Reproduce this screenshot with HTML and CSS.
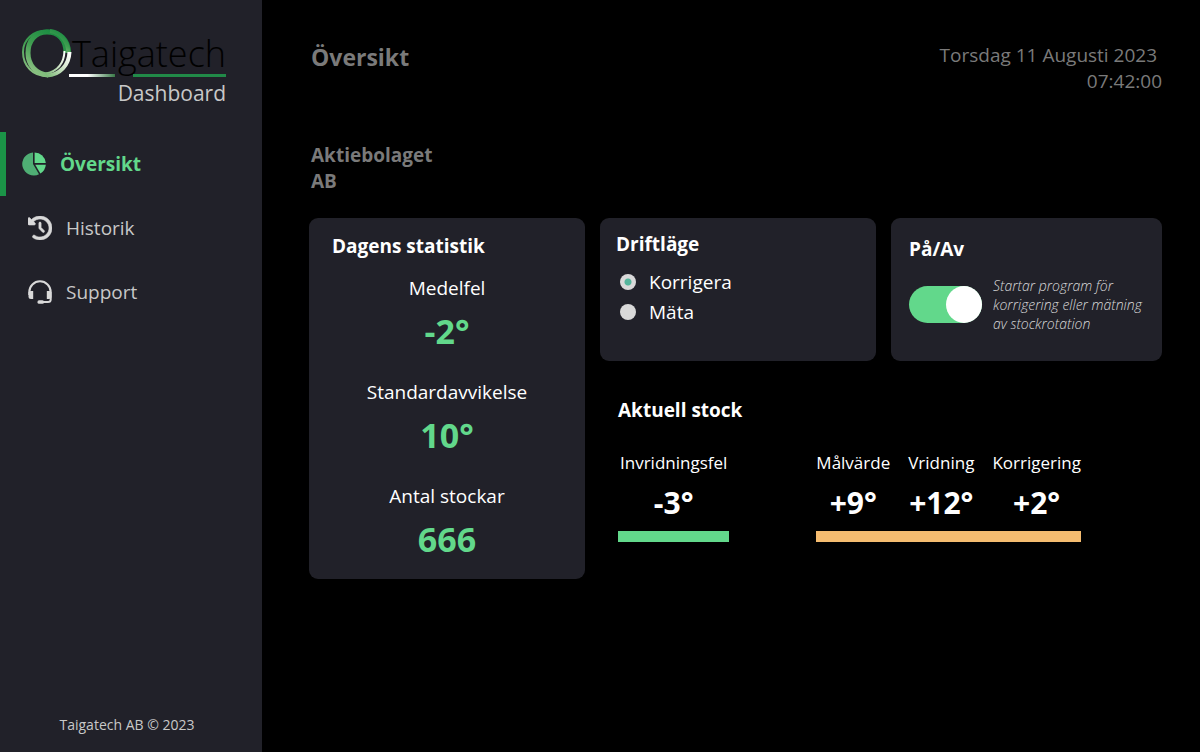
FILE: index.html
```html
<!DOCTYPE html>
<html lang="sv">
<head>
  <meta charset="UTF-8">
  <title>Taigatech Dashboard</title>
  <meta name="viewport" content="width=device-width, initial-scale=1.0">
  <link rel="stylesheet" href="styles.css">
</head>
<body>

  <aside class="sidebar">
    <div class="brand">
      <div class="logo">
        <svg class="logo-ring" width="50" height="50" viewBox="0 0 50 50" fill="none" aria-hidden="true">
          <defs>
            <linearGradient id="ring" x1="0.8" y1="0" x2="0.3" y2="1">
              <stop offset="0" stop-color="#168a40"/>
              <stop offset="0.5" stop-color="#3f9d50"/>
              <stop offset="1" stop-color="#8cc283"/>
            </linearGradient>
            <linearGradient id="tail" x1="1" y1="0" x2="0" y2="1">
              <stop offset="0" stop-color="#ffffff"/>
              <stop offset="0.4" stop-color="#dcebd4"/>
              <stop offset="1" stop-color="#7dba78"/>
            </linearGradient>
          </defs>
          <path d="M44 24C44 10 36 3 25 3C13 3 6 12 6 24C6 36 14 45 26 46" stroke="url(#ring)" stroke-width="5"/>
          <path d="M48 24C48 10 38 1 26 1.500C11 1 1 11 1 23C1 37 11 47 25 47" stroke="url(#ring)" stroke-width="2"/>
          <path d="M46.500 24C46 12 38 3 28 2" stroke="url(#ring)" stroke-width="4"/>
          <path d="M47.500 23C47 36 38 46 25 46.500" stroke="url(#tail)" stroke-width="4"/>
          <path d="M42.500 22C42 34 36 42 24 44.500" stroke="url(#tail)" stroke-width="2"/>
        </svg>
        <div class="logo-name">
          <span>Taigatech</span>
          <div class="logo-lines"><i class="line-fade"></i><i class="line-green"></i></div>
        </div>
      </div>
      <p class="logo-sub">Dashboard</p>
    </div>

    <nav>
      <a class="active" href="#oversikt">
        <svg width="24" height="24" viewBox="0 0 24 24" aria-hidden="true">
          <path d="M11 0.500V12L17 22.200A11.500 11.500 0 1 1 11 0.500Z" fill="#4fae74"/>
          <path d="M12.600 0.500A11.500 11.500 0 0 1 23.800 11H12.600Z" fill="#62d88b"/>
          <path d="M13.200 12.700H23.800A11.500 11.500 0 0 1 18.400 21.500Z" fill="#62d88b"/>
        </svg>
        Översikt
      </a>
      <a href="#historik">
        <svg width="24" height="24" viewBox="0 0 512 512" fill="#d9d9d9" aria-hidden="true">
          <path d="M75 75L41 41C25.900 25.900 0 36.600 0 57.900V168c0 13.300 10.700 24 24 24h110.100c21.400 0 32.100-25.900 17-41l-30.800-30.800C155 85.500 203 64 256 64c106 0 192 86 192 192s-86 192-192 192c-40.800 0-78.600-12.700-109.700-34.400-14.500-10.100-34.400-6.600-44.600 7.900s-6.600 34.400 7.900 44.600C151.200 495 201.700 512 256 512c141.400 0 256-114.600 256-256S397.400 0 256 0C185.300 0 121.300 28.700 75 75zm181 53c-13.300 0-24 10.700-24 24v104c0 6.400 2.500 12.500 7 17l72 72c9.400 9.400 24.600 9.400 33.900 0s9.400-24.600 0-33.900l-65-65V152c0-13.300-10.700-24-24-24z" stroke="#d9d9d9" stroke-width="12"/>
        </svg>
        Historik
      </a>
      <a href="#support">
        <svg width="24" height="24" viewBox="0 0 24 24" fill="none" stroke="#d9d9d9" stroke-width="2" aria-hidden="true">
          <path d="M1.300 15V12A10.700 10.700 0 0 1 22.700 12V19.500Q22.700 22 20 22H14"/>
          <path d="M0.500 12.500Q0.500 11 2.500 11H5.200V19H3Q0.500 19 0.500 16.500Z" fill="#d9d9d9" stroke="none"/>
          <path d="M23.500 12.500Q23.500 11 21.500 11H18.800V19H21Q23.500 19 23.500 16.500Z" fill="#d9d9d9" stroke="none"/>
          <rect x="9.500" y="20.200" width="6.500" height="3.600" rx="1.500" fill="#d9d9d9" stroke="none"/>
        </svg>
        Support
      </a>
    </nav>

    <footer>Taigatech AB © 2023</footer>
  </aside>

  <main>
    <header>
      <h1>Översikt</h1>
      <p class="date">Torsdag 11 Augusti 2023&nbsp;<br>07:42:00</p>
    </header>

    <p class="company">Aktiebolaget<br>AB</p>

    <div class="grid">
      <section class="card stats">
        <h2>Dagens statistik</h2>
        <dl>
          <div><dt>Medelfel</dt><dd>-2°</dd></div>
          <div><dt>Standardavvikelse</dt><dd>10°</dd></div>
          <div><dt>Antal stockar</dt><dd>666</dd></div>
        </dl>
      </section>

      <section class="card mode">
        <h2>Driftläge</h2>
        <label><input type="radio" name="mode" value="korrigera" checked> Korrigera</label>
        <label><input type="radio" name="mode" value="mata"> Mäta</label>
      </section>

      <section class="card power">
        <h2><label for="power">På/Av</label></h2>
        <div class="power-row">
          <input type="checkbox" class="switch" id="power" checked>
          <p>Startar program för korrigering eller mätning av stockrotation</p>
        </div>
      </section>

      <section class="stock">
        <h2>Aktuell stock</h2>
        <div class="readings">
          <dl class="green">
            <div><dt>Invridningsfel</dt><dd>-3°</dd></div>
          </dl>
          <dl class="orange">
            <div><dt>Målvärde</dt><dd>+9°</dd></div>
            <div><dt>Vridning</dt><dd>+12°</dd></div>
            <div><dt>Korrigering</dt><dd>+2°</dd></div>
          </dl>
        </div>
      </section>
    </div>
  </main>

</body>
</html>
```
FILE: styles.css
```css
:root {
  --bg: #000;
  --panel: #212129;
  --green: #62d88b;
  --dark-green: #1b9447;
  --orange: #f5bc70;
  --muted: #7a7a7a;
  --text: #fff;
  --soft: #c8c8c8;
}

* {
  box-sizing: border-box;
}

body {
  margin: 0;
  display: flex;
  min-height: 100vh;
  font-family: "Open Sans", "Noto Sans", sans-serif;
  font-size: 19px;
  line-height: 26px;
  background: var(--bg);
  color: var(--text);
}

h1, h2, p, dl, dd {
  margin: 0;
}

h2 {
  font-size: 19px;
  line-height: 26px;
}

/* sidebar */
.sidebar {
  flex: 0 0 262px;
  display: flex;
  flex-direction: column;
  background: var(--panel);
  color: var(--soft);
}

.brand {
  padding: 29px 36px 26px 22px;
}

.logo {
  display: flex;
}

.logo-ring {
  flex: none;
  margin-right: -3px;
}

.logo-name {
  flex: 1;
  padding-top: 5px;
  color: #000;
  font-size: 36px;
  font-weight: 300;
  line-height: 40px;
  text-align: right;
}

.logo-lines {
  display: flex;
  gap: 18px;
}

.logo-lines i {
  height: 3px;
}

.line-fade {
  flex: 1;
  background: linear-gradient(to right, #fff 40%, #3a7a48);
}

.line-green {
  flex: 2;
  background: #218a48;
}

.logo-sub {
  margin-top: 1px;
  font-size: 21px;
  text-align: right;
}

nav a {
  display: flex;
  align-items: center;
  gap: 14px;
  height: 64px;
  padding-left: 28px;
  color: var(--soft);
  text-decoration: none;
}

nav a.active {
  padding-left: 16px;
  border-left: 6px solid var(--dark-green);
  color: var(--green);
  font-weight: 700;
}

footer {
  margin-top: auto;
  padding: 0 8px 14px 0;
  font-size: 14px;
  text-align: center;
}

/* content */
main {
  flex: 1;
  padding: 42px 38px 40px 47px;
}

header {
  display: flex;
  justify-content: space-between;
  padding-left: 2px;
  color: var(--muted);
}

h1 {
  font-size: 23px;
  line-height: 30px;
}

.date {
  text-align: right;
}

.company {
  margin: 48px 0 24px;
  padding-left: 2px;
  color: var(--muted);
  font-weight: 700;
}

.grid {
  display: grid;
  grid-template-columns: 276fr 276fr 271fr;
  grid-template-rows: auto 1fr;
  gap: 15px;
}

.card {
  background: var(--panel);
  border-radius: 9px;
}

.stats {
  grid-row: span 2;
  padding: 15px 23px 16px;
}

.stats dl {
  display: flex;
  flex-direction: column;
  gap: 24px;
  margin-top: 16px;
  text-align: center;
}

.stats dd {
  margin-top: 6px;
  color: var(--green);
  font-size: 34px;
  font-weight: 700;
  line-height: 48px;
}

.mode {
  padding: 13px 16px 34px;
}

.mode h2 {
  margin-bottom: 10px;
}

.mode label {
  display: flex;
  align-items: center;
  gap: 13px;
  line-height: 30px;
  padding-left: 4px;
}

.mode input {
  appearance: none;
  width: 16px;
  height: 16px;
  margin: 0;
  border-radius: 50%;
  background: #d9d9d9;
}

.mode input:checked {
  background: radial-gradient(circle, #55b59c 3px, #d9d9d9 4px);
}

.power {
  padding: 18px 18px 26px;
}

.power-row {
  display: flex;
  align-items: center;
  gap: 11px;
  margin-top: 14px;
}

.power p {
  color: #d9d9d9;
  font-size: 14px;
  font-style: italic;
  font-weight: 300;
  line-height: 19px;
}

.switch {
  appearance: none;
  flex: none;
  display: flex;
  justify-content: flex-end;
  width: 73px;
  height: 37px;
  margin: 0;
  border-radius: 19px;
  background: var(--green);
}

.switch::before {
  content: "";
  width: 36px;
  height: 37px;
  border-radius: 50%;
  background: #fff;
}

.switch:not(:checked) {
  justify-content: flex-start;
  background: #666;
}

/* current log */
.stock {
  grid-column: 2 / 4;
  padding: 21px 18px 0;
}

.readings {
  display: flex;
  gap: 87px;
  margin-top: 27px;
}

.readings dl {
  display: flex;
  gap: 18px;
  border-bottom: 11px solid;
  padding-bottom: 8px;
  font-size: 17px;
  text-align: center;
}

.readings dl.green {
  padding-left: 2px;
  padding-right: 2px;
  border-color: var(--green);
}

.readings dl.orange {
  border-color: var(--orange);
}

.readings dd {
  margin-top: 6px;
  font-size: 30px;
  font-weight: 700;
  line-height: 41px;
}
```
